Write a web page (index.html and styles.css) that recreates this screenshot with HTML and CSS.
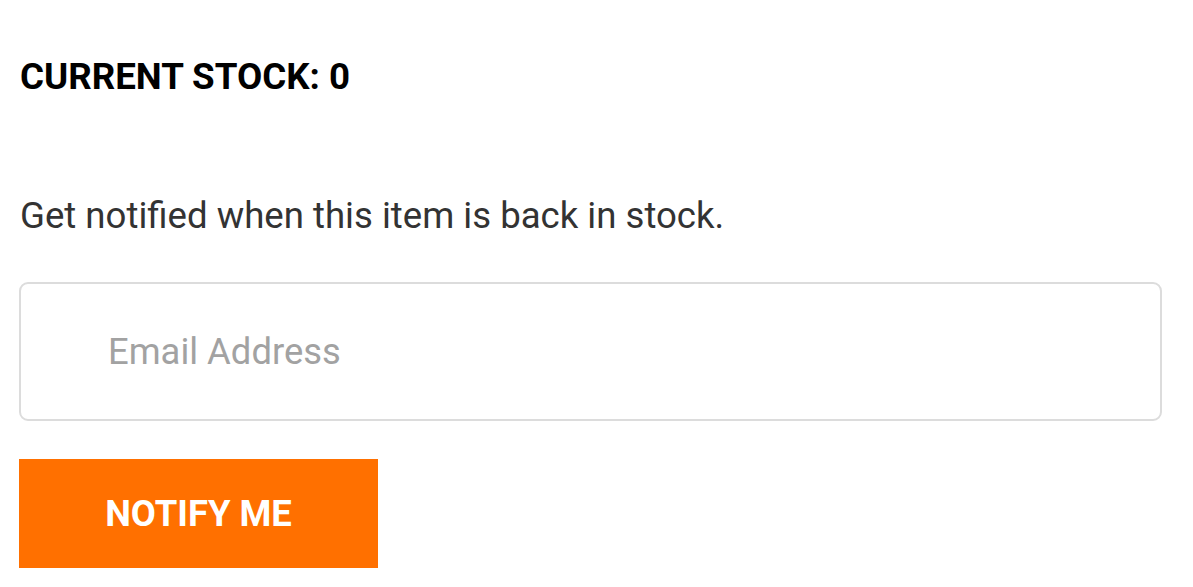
FILE: index.html
```html
<!DOCTYPE html>
<html>
<head>
<meta charset="utf-8">
<link rel="stylesheet" href="styles.css">
</head>
<body>
<div class="stock-box">
  <h2 class="stock-title">CURRENT STOCK: 0</h2>
  <p class="stock-note">Get notified when this item is back in stock.</p>
  <form class="notify-form">
    <input class="email-input" type="email" placeholder="Email Address">
    <button class="notify-btn" type="button">NOTIFY ME</button>
  </form>
</div>
</body>
</html>
```
FILE: styles.css
```css
html, body {
  margin: 0;
  padding: 0;
  background: #fff;
}
body {
  font-family: Roboto, "Liberation Sans", Arial, sans-serif;
}
.stock-box {
  padding: 52px 32px 0 19px;
  display: flex;
  flex-direction: column;
}
.stock-title {
  margin: 0;
  font-size: 36.7px;
  line-height: 50px;
  font-weight: 700;
  color: #000;
  padding-left: 1px;
}
.stock-note {
  margin: 90px 0 0 0;
  font-size: 36.6px;
  line-height: 48px;
  color: #333;
  padding-left: 1px;
}
.notify-form {
  margin-top: 42px;
  display: flex;
  flex-direction: column;
  align-items: flex-start;
}
.email-input {
  box-sizing: border-box;
  width: 1143px;
  height: 139px;
  border: 2px solid #dcdcdc;
  border-radius: 9px;
  padding: 0 0 0 87px;
  font-family: Roboto, "Liberation Sans", Arial, sans-serif;
  font-size: 36.4px;
  color: #333;
  outline: none;
  background: #fff;
}
.email-input::placeholder {
  color: #a2a2a2;
}
.notify-btn {
  margin-top: 38px;
  width: 359px;
  height: 109px;
  border: none;
  background: #ff7000;
  color: #fff;
  font-family: Roboto, "Liberation Sans", Arial, sans-serif;
  font-weight: 700;
  font-size: 36.4px;
  padding: 0;
  cursor: pointer;
}
```
